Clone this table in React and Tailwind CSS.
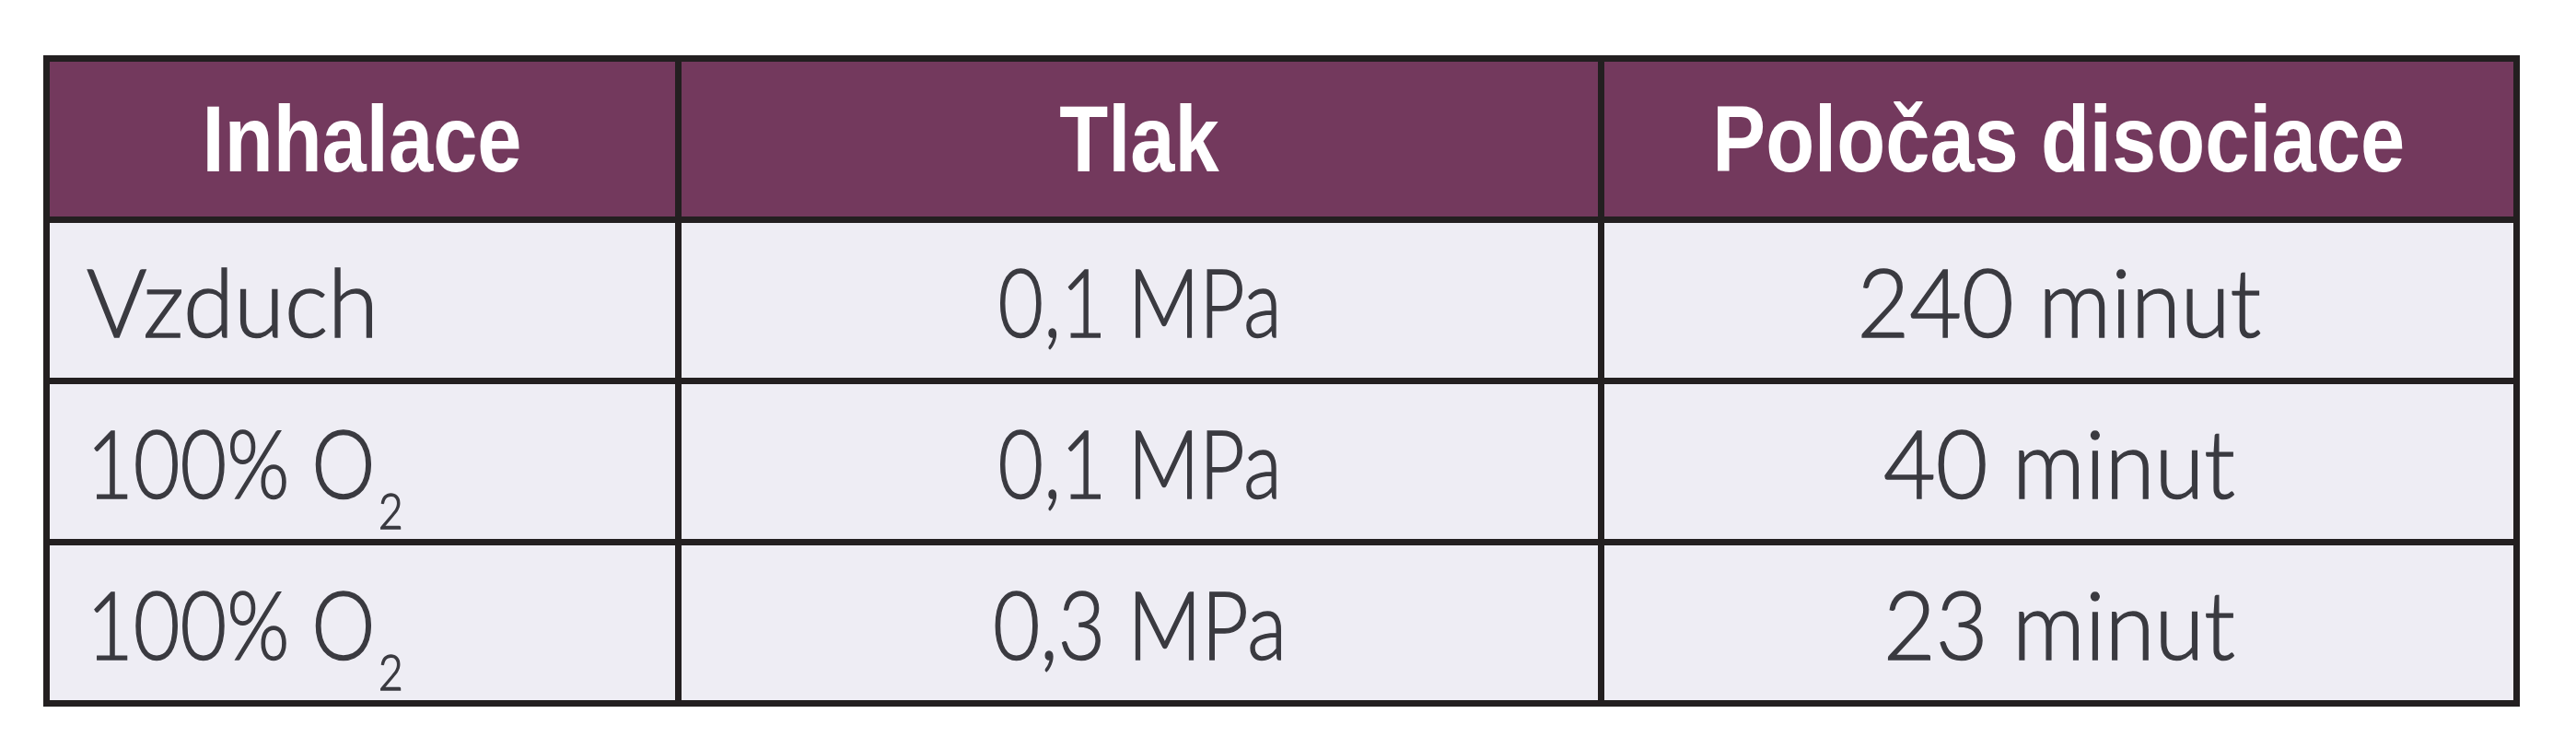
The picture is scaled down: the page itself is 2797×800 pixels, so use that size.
import React from 'react';

const rows = [
  { gas: 'Vzduch', gasScale: 'scale-x-[0.97]', sub: false, tlak: '0,1 MPa', tlakScale: 'scale-x-[0.83]', cas: '240 minut' },
  { gas: '100% O', gasScale: 'scale-x-[0.85]', sub: true, tlak: '0,1 MPa', tlakScale: 'scale-x-[0.83]', cas: '40 minut' },
  { gas: '100% O', gasScale: 'scale-x-[0.85]', sub: true, tlak: '0,3 MPa', tlakScale: 'scale-x-[0.86]', cas: '23 minut' },
];

const HeadCell = ({ children }) => (
  <div className="bg-[#73395d] flex items-center justify-center h-[168px]">
    <span className="inline-block scale-x-[0.85] text-[102px] leading-none font-bold text-white">
      {children}
    </span>
  </div>
);

const body = "bg-[#eeedf4] flex items-center h-[168px] text-[#3a3a40] font-['Lato',sans-serif] font-light [-webkit-text-stroke:1.5px_#3a3a40]";

const App = () => {
  return (
    <div className="w-[2797px] h-[800px] bg-white pt-[60px] pl-[47px] font-['Liberation_Sans',Arial,sans-serif]">
      <div className="w-[2689px] grid grid-cols-[679px_995px_987px] gap-[7px] p-[7px] bg-[#231f20]">
        <HeadCell>Inhalace</HeadCell>
        <HeadCell>Tlak</HeadCell>
        <HeadCell>Poločas disociace</HeadCell>

        {rows.map((r, i) => (
          <React.Fragment key={i}>
            <div className={`${body} pl-[40px]`}>
              <span className={`inline-block origin-left ${r.gasScale} text-[103px] leading-none whitespace-nowrap`}>
                {r.gas}
                {r.sub && <sub className="text-[54px] -bottom-[33px] ml-[4px]">2</sub>}
              </span>
            </div>
            <div className={`${body} justify-center`}>
              <span className={`inline-block ${r.tlakScale} text-[103px] leading-none whitespace-nowrap`}>
                {r.tlak}
              </span>
            </div>
            <div className={`${body} justify-center`}>
              <span className="inline-block scale-x-[0.95] text-[103px] leading-none whitespace-nowrap">
                {r.cas}
              </span>
            </div>
          </React.Fragment>
        ))}
      </div>
    </div>
  );
};

export default App;
